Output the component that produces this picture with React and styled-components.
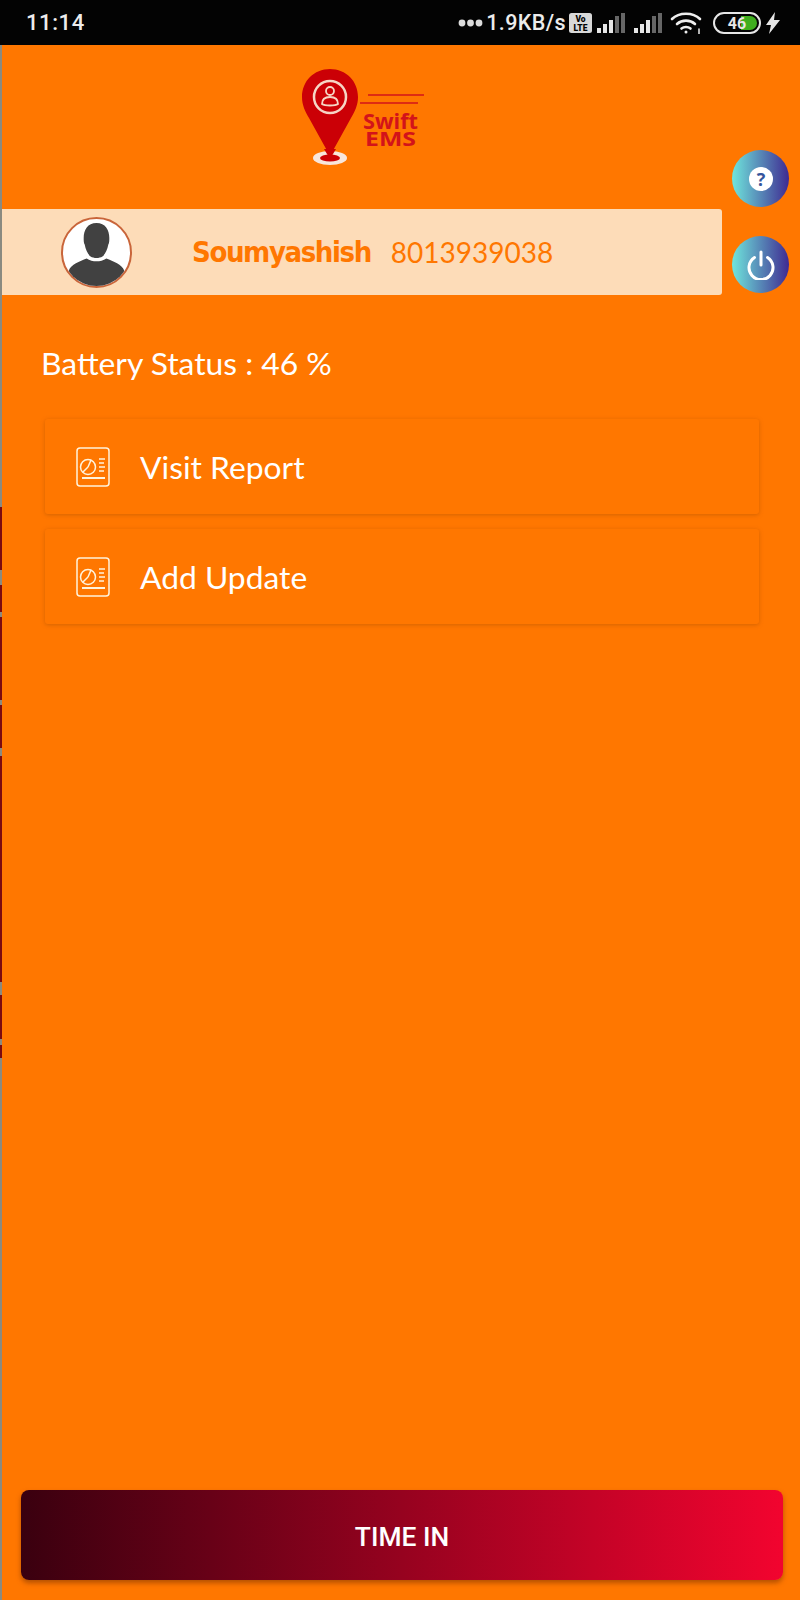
import styled, { createGlobalStyle } from 'styled-components';

const GlobalStyle = createGlobalStyle`
  html, body {
    margin: 0;
    padding: 0;
    background: #ff7700;
  }
  * {
    box-sizing: border-box;
  }
`;

const Page = styled.div`
  width: 800px;
  height: 1600px;
  display: flex;
  flex-direction: column;
  background: #ff7700;
  overflow: hidden;
  font-family: Lato, "Open Sans", sans-serif;
`;

const StatusBar = styled.div`
  height: 45px;
  flex: none;
  display: flex;
  align-items: center;
  justify-content: space-between;
  padding: 0 20px 0 26px;
  background: #030303;
  color: #ececec;
  font-family: Roboto, sans-serif;
  font-weight: 500;
  font-size: 22px;
`;

const Clock = styled.span`
  letter-spacing: 0.6px;
`;

const StatusRight = styled.div`
  display: flex;
  align-items: center;
`;

const StatusGap = styled.span`
  width: ${props => props.$w}px;
`;

const Speed = styled.span`
  font-size: 21.5px;
  letter-spacing: 0.4px;
  margin: 0 3px 0 3px;
`;

const Body = styled.div`
  flex: 1;
  display: flex;
  min-height: 0;
`;

const EdgeStrip = styled.div`
  width: 2px;
  flex: none;
  background: linear-gradient(
    to bottom,
    #8a8a80 0 462px,
    #7a0a10 462px 525px,
    #8a8a80 525px 540px,
    #7a0a10 540px 567px,
    #8a8a80 567px 572px,
    #7a0a10 572px 655px,
    #8a8a80 655px 660px,
    #7a0a10 660px 703px,
    #8a8a80 703px 711px,
    #7a0a10 711px 937px,
    #8a8a80 937px 950px,
    #7a0a10 950px 994px,
    #8a8a80 994px 1000px,
    #7a0a10 1000px 1013px,
    #8a8a80 1013px
  );
`;

const Content = styled.div`
  flex: 1;
  display: flex;
  flex-direction: column;
  min-width: 0;
`;

const Header = styled.div`
  display: grid;
  grid-template-columns: 720px 1fr;
  grid-template-rows: 164px 86px;
`;

const LogoSlot = styled.div`
  padding: 22px 0 0 294px;
`;

const SideButtons = styled.div`
  grid-column: 2;
  grid-row: 1 / span 2;
  display: flex;
  flex-direction: column;
  justify-content: flex-end;
  align-items: flex-start;
  gap: 29px;
  padding: 0 0 2px 10px;
`;

const RoundButton = styled.button`
  width: 57px;
  height: 57px;
  padding: 0;
  border: none;
  border-radius: 50%;
  display: flex;
  align-items: center;
  justify-content: center;
  background: linear-gradient(to right, #6fe6dc, #3f2a92);
`;

const ProfileBar = styled.div`
  grid-column: 1;
  grid-row: 2;
  display: flex;
  align-items: center;
  background: #fddcb8;
  border-radius: 0 3px 3px 0;
  padding-left: 59px;
`;

const Avatar = styled.div`
  width: 71px;
  height: 71px;
  flex: none;
  border-radius: 50%;
  border: 2px solid #c9653a;
  background: #fff;
  overflow: hidden;
  display: flex;
`;

const Name = styled.span`
  margin-left: 60px;
  color: #ff7700;
  font-family: "DejaVu Sans", sans-serif;
  font-weight: 700;
  font-stretch: condensed;
  font-size: 29px;
  letter-spacing: -1.4px;
`;

const Phone = styled.span`
  margin-left: 20px;
  color: #ff7700;
  font-family: Lato, sans-serif;
  font-size: 28px;
`;

const Battery = styled.div`
  margin: 48px 0 0 39px;
  color: #fff;
  font-size: 31.8px;
  line-height: 40px;
`;

const Menu = styled.div`
  display: flex;
  flex-direction: column;
  gap: 15px;
  margin: 36px 41px 0 43px;
`;

const MenuCard = styled.div`
  height: 95px;
  display: flex;
  align-items: center;
  gap: 30px;
  padding-left: 31px;
  border-radius: 3px;
  background: #ff7700;
  box-shadow: 0 1px 4px rgba(150, 70, 0, 0.4);
  color: #fff;
  font-size: 31.8px;
`;

const TimeInButton = styled.button`
  margin: auto 17px 20px 19px;
  height: 90px;
  padding: 3px 0 0;
  border: none;
  border-radius: 8px;
  background: linear-gradient(to right, #3a000f, #f2042f);
  box-shadow: 0 3px 5px rgba(120, 50, 0, 0.55);
  color: #fff;
  font-family: Roboto, sans-serif;
  font-weight: 500;
  font-size: 26.4px;
`;

const LogoText = styled.text`
  font-family: "Open Sans", sans-serif;
  font-weight: 700;
  fill: #d3131a;
`;

const VoLteText = styled.text`
  font-family: Roboto, sans-serif;
  font-weight: 900;
  font-size: 8.5px;
  fill: #030303;
`;

const BatteryText = styled.text`
  font-family: Roboto, sans-serif;
  font-weight: 700;
  font-size: 16px;
`;

const HelpGlyph = styled.text`
  font-family: "Open Sans", sans-serif;
  font-weight: 700;
  font-size: 18px;
  fill: #35559c;
`;

const Logo = () => (
  <svg width="130" height="104" viewBox="0 0 130 104">
    <path d="M34 2C18 2 6 14 6 30c0 8 3 14 7 21l21 38 21-38c4-7 7-13 7-21C62 14 50 2 34 2z" fill="#cb0006" />
    <circle cx="34" cy="30" r="16" fill="none" stroke="#f6d5c5" strokeWidth="2.5" />
    <circle cx="34" cy="24" r="4" fill="none" stroke="#f6d5c5" strokeWidth="1.8" />
    <path d="M26 37c0-5 3-7 8-7s8 2 8 7c-3 2-13 2-16 0z" fill="none" stroke="#f6d5c5" strokeWidth="1.8" />
    <ellipse cx="34" cy="91" rx="17" ry="7" fill="#f8e6dc" />
    <ellipse cx="34" cy="91" rx="10" ry="3.6" fill="#cb0006" />
    <path d="M34 92l-6-10h12z" fill="#cb0006" />
    <path d="M72 28h56" stroke="#d3131a" strokeWidth="1.6" />
    <path d="M64 36h58" stroke="#d3131a" strokeWidth="1.6" />
    <LogoText x="67" y="62" fontSize="21" textLength="55" lengthAdjust="spacingAndGlyphs">Swift</LogoText>
    <LogoText x="69" y="79" fontSize="20" textLength="51" lengthAdjust="spacingAndGlyphs">EMS</LogoText>
  </svg>
);

const Dots = () => (
  <svg width="25" height="10" viewBox="0 0 25 10">
    <circle cx="4" cy="5" r="3.4" fill="#dcdcdc" />
    <circle cx="12.5" cy="5" r="3.4" fill="#dcdcdc" />
    <circle cx="21" cy="5" r="3.4" fill="#dcdcdc" />
  </svg>
);

const VoLte = () => (
  <svg width="23" height="20" viewBox="0 0 23 20">
    <rect width="23" height="20" rx="2.5" fill="#d8d8d8" />
    <VoLteText x="11.5" y="8.5" textAnchor="middle">Vo</VoLteText>
    <VoLteText x="11.5" y="17.5" textAnchor="middle">LTE</VoLteText>
  </svg>
);

const Signal = () => (
  <svg width="28" height="20" viewBox="0 0 28 20">
    <rect x="0" y="15" width="4" height="5" fill="#e6e6e6" />
    <rect x="6" y="11" width="4" height="9" fill="#e6e6e6" />
    <rect x="12" y="7" width="4" height="13" fill="#e6e6e6" />
    <rect x="18" y="3" width="4" height="17" fill="#666" />
    <rect x="24" y="0" width="4" height="20" fill="#666" />
  </svg>
);

const Wifi = () => (
  <svg width="32" height="22" viewBox="0 0 32 22" fill="none" stroke="#eee" strokeWidth="2.6" strokeLinecap="round">
    <path d="M2 7c7-7 21-7 28 0" />
    <path d="M7 12c5-4.5 13-4.5 18 0" />
    <path d="M11.5 16.5c2.5-2 6.5-2 9 0" />
    <circle cx="16" cy="20" r="1.5" fill="#eee" stroke="none" />
    <path d="M29 17v5" strokeWidth="1.5" />
  </svg>
);

const BatteryIcon = () => (
  <svg width="48" height="22" viewBox="0 0 48 22">
    <rect x="1" y="1" width="46" height="20" rx="10" fill="none" stroke="#e6e6e6" strokeWidth="2" />
    <path d="M28 4h9a7 7 0 0 1 0 14h-9z" fill="#3fae1e" />
    <BatteryText x="24" y="17" textAnchor="middle" fill="#e6e6e6">46</BatteryText>
  </svg>
);

const Bolt = () => (
  <svg width="14" height="22" viewBox="0 0 14 22">
    <path d="M9 0L0 13h5l-2 9 11-14H8z" fill="#e6e6e6" />
  </svg>
);

const HelpIcon = () => (
  <svg width="30" height="30" viewBox="0 0 30 30">
    <circle cx="15" cy="15" r="12" fill="#fff" />
    <HelpGlyph x="15" y="21.5" textAnchor="middle">?</HelpGlyph>
  </svg>
);

const PowerIcon = () => (
  <svg width="30" height="30" viewBox="0 0 30 30" fill="none" stroke="#fff" strokeWidth="3" strokeLinecap="round">
    <path d="M15 2v13" />
    <path d="M8.5 7.5a12 12 0 1 0 13 0" />
  </svg>
);

const AvatarFigure = () => (
  <svg width="67" height="67" viewBox="0 0 68 68">
    <path d="M34 4c-9 0-13 7-13 15 0 3 0 5 1 7 1 5 3 10 6 12 3 2 9 2 12 0 3-2 5-7 6-12 1-2 1-4 1-7 0-8-4-15-13-15z" fill="#414141" />
    <path d="M24 40c-7 3-16 6-18 12-1 4-1 6 0 9 7 7 17 9 28 9s21-2 28-9c1-3 1-5 0-9-2-6-11-9-18-12-6 4-14 4-20 0z" fill="#414141" />
  </svg>
);

const ReportIcon = () => (
  <svg width="34" height="40" viewBox="0 0 34 40" fill="none" stroke="#fff3dc" strokeWidth="1.5">
    <rect x="1" y="1" width="32" height="38" rx="3" />
    <circle cx="12" cy="20" r="7.5" />
    <path d="M12 20l3-7M12 20l-5 5" />
    <path d="M23 12h6M23 16h5M23 20h6M23 24h5" />
    <path d="M6 31h23" strokeWidth="2" />
  </svg>
);

export default function App() {
  return (
    <Page>
      <GlobalStyle />
      <StatusBar>
        <Clock>11:14</Clock>
        <StatusRight>
          <Dots />
          <Speed>1.9KB/s</Speed>
          <VoLte />
          <StatusGap $w={5} />
          <Signal />
          <StatusGap $w={9} />
          <Signal />
          <StatusGap $w={8} />
          <Wifi />
          <StatusGap $w={11} />
          <BatteryIcon />
          <StatusGap $w={5} />
          <Bolt />
        </StatusRight>
      </StatusBar>
      <Body>
        <EdgeStrip />
        <Content>
          <Header>
            <LogoSlot>
              <Logo />
            </LogoSlot>
            <SideButtons>
              <RoundButton>
                <HelpIcon />
              </RoundButton>
              <RoundButton>
                <PowerIcon />
              </RoundButton>
            </SideButtons>
            <ProfileBar>
              <Avatar>
                <AvatarFigure />
              </Avatar>
              <Name>Soumyashish</Name>
              <Phone>8013939038</Phone>
            </ProfileBar>
          </Header>
          <Battery>Battery Status : 46 %</Battery>
          <Menu>
            <MenuCard>
              <ReportIcon />
              Visit Report
            </MenuCard>
            <MenuCard>
              <ReportIcon />
              Add Update
            </MenuCard>
          </Menu>
          <TimeInButton>TIME IN</TimeInButton>
        </Content>
      </Body>
    </Page>
  );
}
